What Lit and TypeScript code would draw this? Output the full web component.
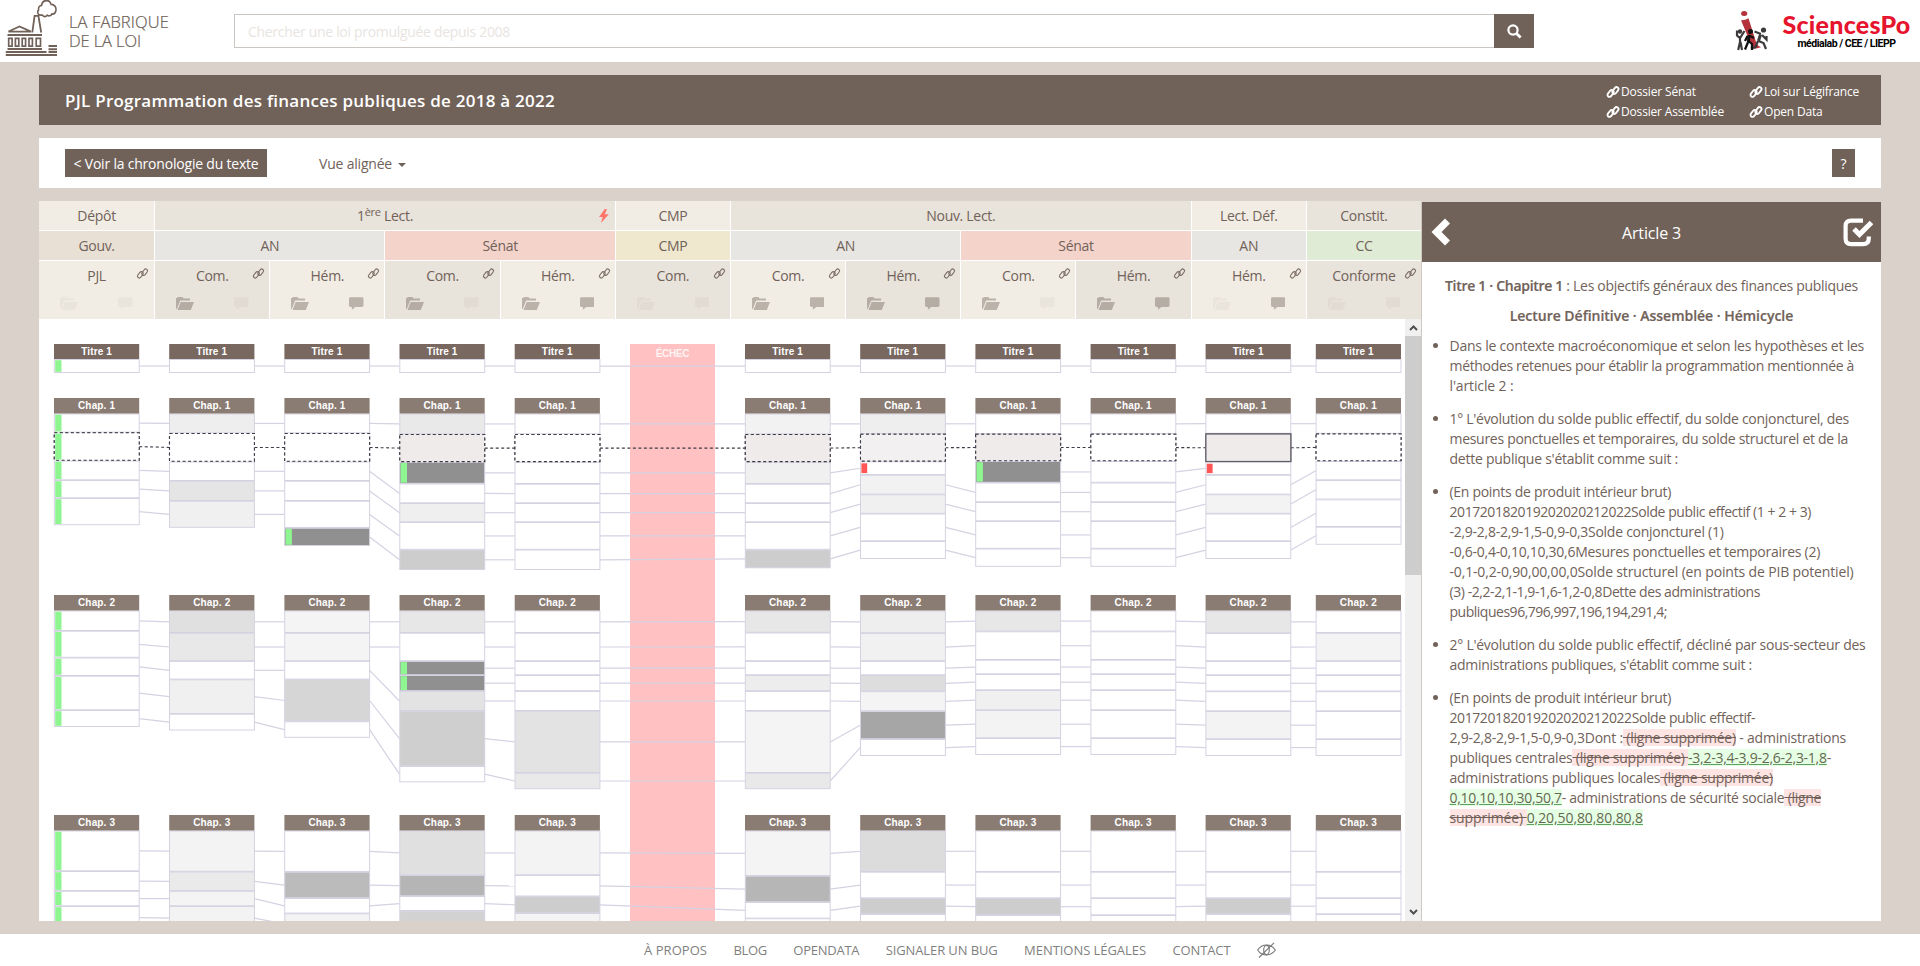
import { LitElement, html, svg, css, nothing } from "lit";
import { customElement, property } from "lit/decorators.js";
import { classMap } from "lit/directives/class-map.js";

/* ---------- text run set to a given measure ---------- */
@customElement("fit-text")
class FitText extends LitElement {
  @property({ type: Number }) w = 0;
  static styles = css`
    :host { display: inline-block; white-space: nowrap; }
  `;
  render() { return html`<slot></slot>`; }
  firstUpdated() {
    const n = (this.textContent || "").trim().length;
    const cur = this.getBoundingClientRect().width;
    if (n && this.w) this.style.letterSpacing = `${(this.w - cur) / n}px`;
  }
}

/* ---------- icons ---------- */
const linkIcon = html`<svg class="i-link" viewBox="0 0 12 12" fill="none" stroke="currentColor"><g transform="rotate(-52 6 6)"><rect x="-.4" y="3" width="7.600" height="4" rx="2"/><rect x="4.800" y="5" width="7.600" height="4" rx="2"/></g></svg>`;
const folderIcon = (on: boolean) => html`<svg class=${classMap({ "i-folder": true, off: !on })} viewBox="0 0 18 13"><path fill="currentColor" d="M0 12V1h1l1-1h4.500l1 1.500h6.500V3.500H4.200L.8 12zM1.500 13L4.700 5H18l-3.200 8z"/></svg>`;
const commentIcon = (on: boolean) => html`<svg class=${classMap({ "i-comment": true, off: !on })} viewBox="0 0 15 13"><path fill="currentColor" d="M1.500 0h12A1.500 1.500 0 0 1 15 1.500V8.500A1.500 1.500 0 0 1 13.500 10H6.500L3 13V10H1.500A1.500 1.500 0 0 1 0 8.500V1.500A1.500 1.500 0 0 1 1.500 0z"/></svg>`;
const boltIcon = html`<svg class="i-bolt" viewBox="0 0 10 14"><path fill="#ff7569" d="M5.800 0L0 8h3.600L2 14 9.800 5.200H5.800L8 0z"/></svg>`;

const logo = html`<svg class="logo" viewBox="0 0 60 60" fill="none" stroke="#716259">
  <path stroke-width="1.800" d="M39.500 15.200h-3a3 3 0 0 1-1.500-5.200a3.800 3.800 0 0 1 3.500-4.700a5.700 5.700 0 0 1 11-1a5.300 5.300 0 0 1 5.600 6.500a4.300 4.300 0 0 1-4.600 3.200a4 4 0 0 1-5.500 1.200a3.500 3.500 0 0 1-5.500 0z" transform="translate(8.500 0) scale(.86 1)"/>
  <path stroke-width="1.800" d="M32.300 32.500L34.600 15.800H38.400L41.200 32.500"/>
  <path stroke-width="1.700" d="M8.500 31.600L19.500 26.500L31 31.600z"/>
  <path stroke-width="1.900" d="M7.500 35H42M7.500 49H42M5.800 52H46.500M5.800 55H57M48.500 46H57M48.500 49.200H57M48.500 52H57"/>
  <path stroke-width="1.700" d="M8.700 38.300H12.100V46.200H8.700zM15.400 38.300H18.800V46.200H15.400zM22.200 38.300H25.600V46.200H22.200zM29 38.300H32.400V46.200H29zM36.200 38.300H40.500V46.200H36.200z"/>
</svg>`;

const people = html`<svg class="people" viewBox="0 0 34 42">
  <ellipse cx="9.200" cy="3.500" rx="3.100" ry="2.500" fill="#b5323a"/>
  <path fill="#b5323a" d="M6 10.200Q10 10.500 13.500 8.200L21.500 33.500Q23.500 36.500 26 37.200L20 38.800Q16.500 37.500 15.500 33z"/>
  <g stroke="#3c3a3a" fill="none" stroke-width="2.200">
    <circle cx="5" cy="21.500" r="2.200" fill="#3c3a3a" stroke="none"/>
    <path d="M2 20.500V25.500L5 28L9.500 21M5 26V32L3.200 40M5.500 32L7 40" />
    <circle cx="28.500" cy="20" r="2.600" fill="#3c3a3a" stroke="none"/>
    <path stroke-width="3" d="M25.500 24.500L23.500 31"/>
    <path d="M26 24L19.500 21.500M27 25L31.500 29.500V26M23.500 31L28.500 33L31 39M23 31L20.500 37L16 38.500"/>
  </g>
  <g stroke="#111" fill="none" stroke-width="2.300">
    <circle cx="15.500" cy="21.500" r="2.500" fill="#111" stroke="none"/>
    <path stroke-width="3" d="M14 25L13.500 31"/>
    <path d="M14 25.500L19 28M13.500 31L17 34V40M13.500 31L10 39.500M12.500 26L10 31"/>
  </g>
</svg>`;

/* ---------- diagram data ---------- */
// One box: key that links it to the next step, fill, optional mark ("g" added, "r" removed)
type Box = [string, string, string?];
interface Block { ys: number[]; boxes: Box[]; }
interface Section { label: string; top: number; main?: boolean; cols: (Block | null)[]; }

const X = [54, 169.200, 284.400, 399.500, 514.700, 630, 745, 860.200, 975.400, 1090.600, 1205.600, 1315.800];
const BW = 85.200;
const DK = "#909090";
const b = (ys: number[], keys: string, fills: string[], marks: string[] = []): Block => ({
  ys, boxes: keys.split("").map((k, i) => [k, fills[i] || "#fff", marks[i]] as Box),
});
const G = ["g", "g", "g", "g", "g", "g"];
const titre = (m?: string) => b([359, 372.700], "a", [], m ? [m] : []);

const sections: Section[] = [
  { label: "Titre 1", top: 344, main: true,
    cols: [titre("g"), titre(), titre(), titre(), titre(), null, titre(), titre(), titre(), titre(), titre(), titre()] },
  { label: "Chap. 1", top: 398, cols: [
    b([413.500, 432.300, 460.500, 480, 498, 524.900], "aBcde", [], G),
    b([413.500, 433, 461.500, 480.700, 500.700, 527.500], "aBcde", ["#eeeeee", "", "", "#e5e5e5", "#f0f0f0"]),
    b([413.500, 433, 461.500, 480.700, 500.700, 527.700, 545.700], "aBcdef", ["", "", "", "", "", DK], ["", "", "", "", "", "g"]),
    b([413.500, 434, 461.800, 483.500, 503, 522, 549.500, 569.700], "aBncdef", ["#e9e9e9", "#efebea", DK, "", "#efefef", "", "#cdcdcd"], ["", "", "g"]),
    b([413.500, 434, 461.800, 483.700, 503, 522, 549.500, 569.700], "aBncdef", []),
    null,
    b([413.500, 434, 461.800, 483.700, 503, 522, 549.500, 568], "aBncdef", ["#f2f2f2", "#efebea", "#f0f0f0", "", "", "", "#cdcdcd"]),
    b([413.500, 433.700, 461.300, 474.800, 494.300, 513.500, 541, 558.700], "aBncdef", ["#eeeeee", "#f2f0f1", "", "#f2f2f2", "#f0f0f0"], ["", "", "r"]),
    b([413.500, 433.700, 461, 482.500, 502, 521, 548.500, 566.500], "aBncdef", ["", "#efebea", DK], ["", "", "g"]),
    b([413.500, 433.700, 461, 482.500, 502, 521, 548.500, 566.500], "aBncdef", []),
    b([413.500, 433.500, 461.700, 474.800, 494.300, 513.500, 541, 558.700], "aBncdef", ["", "#efebea", "", "", "#f3f3f3"], ["", "", "r"]),
    b([413.500, 433.500, 461, 480, 499.300, 526.700, 544.500], "aBcdef", []),
  ] },
  { label: "Chap. 2", top: 595, cols: [
    b([610.500, 630.700, 657.500, 675.700, 710, 726.700], "abcde", [], G),
    b([610.500, 632.700, 660.900, 679.300, 713.700, 730.200], "abcde", ["#e0e0e0", "#e8e8e8", "", "#f0f0f0"]),
    b([610.500, 632.700, 660.900, 679.300, 721.300, 737.500], "abcde", ["#f4f4f4", "#f4f4f4", "", "#d6d6d6"]),
    b([610.500, 632.700, 660.900, 675, 690.900, 710.700, 766, 782], "abxycde", ["#e7e7e7", "", DK, DK, "#e3e3e3", "#cfcfcf"], ["", "", "g", "g"]),
    b([610.500, 632.700, 660.900, 675, 690.900, 710.700, 772.700, 788.900], "abxycde", ["", "", "", "", "", "#e3e3e3", "#e9e9e9"]),
    null,
    b([610.500, 632.500, 660.900, 675, 690.900, 710.700, 772.700, 788.900], "abxycde", ["#e7e7e7", "", "", "#ededed", "", "#f4f4f4", "#e9e9e9"]),
    b([610.500, 632.900, 660.900, 675, 691.200, 711, 739, 755.700], "abxycde", ["#eeeeee", "#f1f1f1", "", "#dddddd", "#f4f4f4", "#a6a6a6"]),
    b([610.500, 631.300, 659.700, 674, 690, 710, 738, 754.700], "abxycde", ["#e7e7e7", "", "", "", "#f0f0f0", "#f3f3f3"]),
    b([610.500, 631.300, 659.700, 674, 690, 710, 738, 754.700], "abxycde", []),
    b([610.500, 632.900, 660.900, 675, 691.200, 711, 739, 755.700], "abxycde", ["#e7e7e7", "", "", "", "", "#f3f3f3"]),
    b([610.500, 632.700, 660.900, 675, 691.200, 711, 739, 755.700], "abxycde", ["", "#f3f3f3"]),
  ] },
  { label: "Chap. 3", top: 815, cols: [
    b([830.500, 871, 890.800, 906, 929], "abcd", [], G),
    b([830.500, 871.500, 890.800, 906, 930], "abcd", ["#f3f3f3", "#eaeaea", "#f4f4f4", "#f3f3f3"]),
    b([830.500, 871.700, 898, 913.300, 934], "abcd", ["", "#bbbbbb", "", "#f3f3f3"]),
    b([830.500, 875, 896, 910.700, 934], "abcd", ["#e0e0e0", "#b5b5b5", "", "#d2d2d2"]),
    b([830.500, 875, 896.200, 913, 934], "abcd", ["#f3f3f3", "", "#cdcdcd", "#f4f4f4"]),
    null,
    b([830.500, 875.700, 902, 918.300, 938], "abcd", ["#f4f4f4", "#b6b6b6"]),
    b([830.500, 871.700, 898, 914, 934], "abcd", ["#dcdcdc", "", "#cdcdcd"]),
    b([830.500, 871.700, 898, 915, 934], "abcd", ["", "", "#cdcdcd"]),
    b([830.500, 871.700, 898, 915, 934], "abcd", []),
    b([830.500, 871.700, 898, 914, 934], "abcd", ["", "", "#cdcdcd"]),
    b([830.500, 871.700, 898, 914, 934], "abcd", []),
  ] },
];

/* ---------- step headings ---------- */
const stages = [
  { t: "Dépôt", n: 1 }, { t: "lect1", n: 4 }, { t: "CMP", n: 1 }, { t: "Nouv. Lect.", n: 4 }, { t: "Lect. Déf.", n: 1 }, { t: "Constit.", n: 1 },
];
const chambers = [
  { t: "Gouv.", n: 1, c: "gouv" }, { t: "AN", n: 2, c: "an" }, { t: "Sénat", n: 2, c: "senat" }, { t: "CMP", n: 1, c: "cmp" },
  { t: "AN", n: 2, c: "an" }, { t: "Sénat", n: 2, c: "senat" }, { t: "AN", n: 1, c: "an" }, { t: "CC", n: 1, c: "cc" },
];
const steps: [string, boolean, boolean][] = [
  ["PJL", false, false], ["Com.", true, false], ["Hém.", true, true], ["Com.", true, false], ["Hém.", true, true], ["Com.", false, false],
  ["Com.", true, true], ["Hém.", true, true], ["Com.", true, false], ["Hém.", true, true], ["Hém.", false, true], ["Conforme", false, false],
];

@customElement("law-diagram")
class LawDiagram extends LitElement {
  static styles = css`
    :host { display: block; width: 1366px; height: 602px; }
    svg { display: block; }
    text { font: bold 10px "Liberation Sans", Arial, sans-serif; fill: #fff; text-anchor: middle; letter-spacing: .15px; }
    .echec { fill-opacity: .85; letter-spacing: -.3px; }
    .box { stroke: #d5d2e2; stroke-width: 1; }
    .link { stroke: #d5d2e2; stroke-width: 1.200; fill: none; }
    .dash { stroke: #3d3b47; stroke-dasharray: 3 2.500; stroke-width: 1.100; }
    .solid { stroke: #5f5d68; stroke-width: 1.200; }
  `;
  private rect(x: number, blk: Block, i: number, col: number) {
    const [k, fill, mark] = blk.boxes[i];
    const y = blk.ys[i] + 0.5, h = blk.ys[i + 1] - blk.ys[i] - 0.7;
    const cls = "box" + (k === "B" ? (col === 10 ? " solid" : " dash") : "");
    return svg`<rect class=${cls} x=${x + 0.3} y=${y} width=${BW - 0.3} height=${h} fill=${fill}></rect>
      ${mark ? svg`<rect x=${x + 1.2} y=${y + (mark === "r" ? 1.500 : 0.700)} width=${mark === "r" ? 5.800 : 6.300}
        height=${h - (mark === "r" ? 3 : 1.400)} fill=${mark === "r" ? "#ff5555" : "#8ef591"}></rect>` : nothing}`;
  }
  private links(cols: (Block | null)[]) {
    const out: unknown[] = [];
    for (let c = 0; c < 11; c++) {
      const from = cols[c];
      if (!from) continue;
      const t = cols[c + 1] ? c + 1 : c + 2;
      const to = cols[t]!;
      from.boxes.forEach(([k, , mark], i) => {
        const j = to.boxes.findIndex(o => o[0] === k);
        if (j < 0 || mark === "r") return;
        const my = (blk: Block, n: number) => (blk.ys[n] + blk.ys[n + 1]) / 2 + 0.2;
        out.push(svg`<line class=${k === "B" ? "link dash" : "link"} x1=${X[c] + BW} y1=${my(from, i)} x2=${X[t]} y2=${my(to, j)}></line>`);
      });
    }
    return out;
  }
  render() {
    return html`<svg width="1366" height="602" viewBox="39 319 1366 602">
      <rect x="630" y="344" width="85" height="577" fill="#ffc1c1"></rect>
      <text class="echec" x="672.500" y="357">ÉCHEC</text>
      ${sections.map(s => svg`
        ${this.links(s.cols)}
        ${s.cols.map((blk, c) => blk ? svg`
          ${blk.boxes.map((_, i) => this.rect(X[c], blk, i, c))}
          ${blk.boxes.map((bx, i) => bx[0] === "B" ? this.rect(X[c], blk, i, c) : nothing)}
          <rect x=${X[c]} y=${s.top} width=${BW} height=${s.main ? 15 : 15.500} fill=${s.main ? "#786860" : "#8a7c73"}></rect>
          <text x=${X[c] + BW / 2} y=${s.top + 11.200}>${s.label}</text>` : nothing)}`)}
    </svg>`;
  }
}

@customElement("app-root")
class AppRoot extends LitElement {
  static styles = css`
    :host { display: flex; flex-direction: column; height: 966px; background: #dad1cb; color: #716259;
      font: 14px/20px "Open Sans", "Noto Sans", sans-serif; overflow: hidden; }
    * { box-sizing: border-box; }
    svg { display: block; flex: none; }
    header { height: 62px; background: #fff; display: flex; align-items: center; flex: none; }
    .logo { width: 60px; height: 60px; margin-bottom: 2px; }
    .brand { margin: 1px 0 0 9px; width: 165px; display: flex; flex-direction: column; font-size: 16.500px; line-height: 18.500px; font-weight: 300; color: #6a5b52; -webkit-text-stroke: .2px #6a5b52; }
    .search { display: flex; width: 1300px; height: 34px; }
    .field { flex: 1; border: 1px solid #ccc6c3; border-right: 0; padding: 7px 13px 0; color: #e8e4e1; }
    .go { width: 40px; background: #716259; display: grid; place-items: center; }
    .go svg { width: 15px; height: 15px; }
    .people { width: 34px; height: 42px; margin-left: 201px; }
    .spo { margin-left: 12.500px; width: 130px; display: flex; flex-direction: column; align-items: center; }
    .spo .a { font: 900 25px/25px Lato, sans-serif; color: #e6142d; }
    .spo .b { font: bold 10.500px/13px Roboto, sans-serif; color: #000; }
    .title { margin: 13px 39px 0; height: 50px; flex: none; background: #716259; color: #fff; display: flex; align-items: center; padding: 2px 0 0 26px; justify-content: space-between; }
    .title h1 { margin: 0; font-size: 17px; font-weight: 650; }
    .ext { display: grid; grid-template-columns: 143px 131px; font-size: 12px; line-height: 20px; padding-top: 1px; }
    .ext div { display: flex; align-items: center; gap: 2px; }
    .ext .i-link { width: 12px; height: 12px; stroke-width: 1.800px; overflow: visible; }
    .bar { margin: 13px 39px 0; height: 50px; flex: none; background: #fff; display: flex; align-items: center; padding: 0 26px; }
    .btn { background: #716259; color: #fff; height: 28px; line-height: 29.500px; text-align: center; }
    .back { width: 202px; }
    .view { margin-left: 52px; display: flex; align-items: center; gap: 6px; padding-top: 2px; }
    .caret { border: 4px solid transparent; border-top-color: #716259; border-bottom: 0; margin-top: 2px; }
    .help { width: 23px; margin-left: auto; }
    main { margin: 13px 39px 13px; height: 720px; flex: none; display: flex; }
    .left { width: 1382px; background: #fff; }
    .grid { display: grid; grid-template-columns: repeat(12, 1fr); text-align: center; row-gap: 1px; letter-spacing: -.3px; }
    .cell { border-left: 1px solid #fff; height: 29px; line-height: 28px; background: #f2ede4; display: flex; justify-content: center; align-items: center; }
    .cell.alt { background: #e8e3db; }
    .cell.edge, .step.edge { border-left: 0; }
    .s4 { grid-column: span 4; } .s2 { grid-column: span 2; }
    .cell.gouv { background: #e8e0d5; } .cell.an { background: #e8e6e2; } .cell.senat { background: #f4d3cb; } .cell.cmp { background: #f0e8ce; } .cell.cc { background: #dfebd5; }
    .lect { flex: 1; padding-left: 16px; }
    sup { font-size: 11px; line-height: 0; vertical-align: 5px; }
    .i-bolt { width: 10px; height: 14px; margin-right: 6px; }
    .step { border-left: 1px solid #fff; height: 58px; background: #f2ede4; display: grid; grid-template-columns: 21px 58px 19px 1fr; grid-template-rows: 28px 1fr; }
    .step.alt { background: #e8e3db; }
    .step .n { grid-column: 1 / 5; grid-row: 1; line-height: 29px; }
    .step .i-link { grid-column: 4; grid-row: 1; width: 11px; height: 11px; margin-top: 7px; stroke-width: 1.250px; opacity: .9; overflow: visible; }
    .i-folder { grid-column: 2; grid-row: 2; width: 18px; height: 13px; margin-top: 8px; opacity: .42; }
    .i-comment { grid-column: 3; grid-row: 2; width: 14.500px; height: 13px; margin-top: 8px; opacity: .42; }
    .i-folder.off, .i-comment.off { opacity: .05; }
    .scroll { display: flex; height: 602px; overflow: hidden; }
    .track { width: 16px; background: #f0f0f0; display: flex; flex-direction: column; align-items: center; padding: 6px 0; }
    .track svg { width: 9px; height: 6px; }
    .thumb { width: 16px; height: 239px; background: #cdcdcd; margin: 5px 0 auto; }
    aside { width: 460px; height: 719px; margin-top: 1px; background: #fff; border-left: 1px solid #d0c8c2; }
    .ahead { height: 60px; background: #716259; color: #fff; display: flex; align-items: center; padding: 0 7px 0 9px; font-size: 16px; }
    .ahead .chev { width: 20px; height: 28px; }
    .ahead .chk { width: 31px; height: 29px; }
    .ahead fit-text { margin: 1px auto 0 171px; }
    .line { text-align: center; height: 20px; margin-bottom: 10px; }
    .body { padding: 13.500px 0 0; }
    ul { list-style: none; margin: 0; padding: 0 0 0 27.500px; }
    li { margin-bottom: 13px; display: flex; flex-direction: column; align-items: flex-start; }
    li fit-text { line-height: 20px; height: 20px; white-space: pre; }
    li fit-text:first-child::before { content: ""; float: left; width: 5.500px; height: 5.500px; border-radius: 50%; background: #716259; margin: 7px 11.500px 0 -17px; }
    del { background: linear-gradient(#fee4e3, #fee4e3) 0 50% / 100% 17px no-repeat; }
    ins { background: linear-gradient(#e5ffe5, #e5ffe5) 0 50% / 100% 17px no-repeat; color: #65684f; text-decoration-color: #5f9f60; }
    footer { flex: 1; background: #fff; color: #7f7f80; display: flex; font-size: 13px; line-height: 32px; padding-left: 644px; gap: 26.400px; align-items: center; }
    .eye { width: 19px; height: 16px; }
    b { font-weight: 600; -webkit-text-stroke: .2px #716259; }
  `;

  render() {
    const T = (w: number, t: unknown) => html`<fit-text .w=${w}>${t}</fit-text>`;
    return html`
      <header>
        ${logo}
        <div class="brand"><div>${T(100, "LA FABRIQUE")}</div><div>${T(72, "DE LA LOI")}</div></div>
        <div class="search">
          <div class="field">${T(262, "Chercher une loi promulguée depuis 2008")}</div>
          <div class="go"><svg viewBox="0 0 15 15" fill="none" stroke="#fff"><circle cx="6" cy="6" r="4.600" stroke-width="2.200"/><path d="M9.500 9.500L13.600 13.600" stroke-width="2.800"/></svg></div>
        </div>
        ${people}
        <div class="spo"><span class="a">${T(128, "SciencesPo")}</span><span class="b">${T(98, "médialab / CEE / LIEPP")}</span></div>
      </header>
      <section class="title">
        <h1>${T(490, "PJL Programmation des finances publiques de 2018 à 2022")}</h1>
        <div class="ext">
          <div>${linkIcon}${T(75, "Dossier Sénat")}</div><div>${linkIcon}${T(95, "Loi sur Légifrance")}</div>
          <div>${linkIcon}${T(103, "Dossier Assemblée")}</div><div>${linkIcon}${T(58.500, "Open Data")}</div>
        </div>
      </section>
      <section class="bar">
        <div class="btn back">${T(185, "< Voir la chronologie du texte")}</div>
        <div class="view">${T(73, "Vue alignée")}<span class="caret"></span></div>
        <div class="btn help">?</div>
      </section>
      <main>
        <div class="left">
          <div class="grid">
            ${stages.map((s, i) => html`<div class=${classMap({ cell: true, edge: i === 0, alt: i % 2 === 1, s4: s.n === 4 })}>
              ${s.t === "lect1" ? html`<span class="lect">1<sup>ère</sup> Lect.</span>${boltIcon}` : s.t}</div>`)}
            ${chambers.map((c, i) => html`<div class="cell ${c.c} ${c.n === 2 ? "s2" : ""} ${i ? "" : "edge"}">${c.t}</div>`)}
            ${steps.map(([t, fo, co], i) => html`<div class=${classMap({ step: true, edge: i === 0, alt: i % 2 === 1 })}>
              <span class="n">${t}</span>${linkIcon}${folderIcon(fo)}${commentIcon(co)}</div>`)}
          </div>
          <div class="scroll">
            <law-diagram></law-diagram>
            <div class="track">
              <svg viewBox="0 0 9 6" fill="none" stroke="#505050" stroke-width="2"><path d="M1 5L4.500 1.500L8 5"/></svg>
              <div class="thumb"></div>
              <svg viewBox="0 0 9 6" fill="none" stroke="#505050" stroke-width="2"><path d="M1 1L4.500 4.500L8 1"/></svg>
            </div>
          </div>
        </div>
        <aside>
          <div class="ahead">
            <svg class="chev" viewBox="0 0 20 28"><path fill="#fff" d="M14 0.500L19 5.500L10.500 14L19 22.500L14 27.500L.5 14z"/></svg>
            ${T(59, "Article 3")}
            <svg class="chk" viewBox="0 0 31 29" fill="none" stroke="#fff"><path stroke-width="4.200" d="M20 2.600H8Q2.600 2.600 2.600 8V20.500Q2.600 26.200 8 26.200H20Q25.800 26.200 25.800 20.500V18.500"/><path stroke-width="5" d="M11 11L16.500 16.500L28.500 4.500"/></svg>
          </div>
          <div class="body">
            <div class="line">${T(413, html`<b>Titre 1 · Chapitre 1</b> : Les objectifs généraux des finances publiques`)}</div>
            <div class="line">${T(283.500, html`<b>Lecture Définitive · Assemblée · Hémicycle</b>`)}</div>
            <ul>
              <li>${T(414.500, "Dans le contexte macroéconomique et selon les hypothèses et les")}${T(404.500, "méthodes retenues pour établir la programmation mentionnée à")}${T(64, "l'article 2 :")}</li>
              <li>${T(399.500, "1° L'évolution du solde public effectif, du solde conjoncturel, des")}${T(398.500, "mesures ponctuelles et temporaires, du solde structurel et de la")}${T(228.500, "dette publique s'établit comme suit :")}</li>
              <li>${T(221.500, "(En points de produit intérieur brut)")}${T(361.500, "201720182019202020212022Solde public effectif (1 + 2 + 3)")}${T(274, "-2,9-2,8-2,9-1,5-0,9-0,3Solde conjoncturel (1)")}${T(370.500, "-0,6-0,4-0,10,10,30,6Mesures ponctuelles et temporaires (2)")}${T(404, "-0,1-0,2-0,90,00,00,0Solde structurel (en points de PIB potentiel)")}${T(310.500, "(3) -2,2-2,1-1,9-1,6-1,2-0,8Dette des administrations")}${T(217.500, "publiques96,796,997,196,194,291,4;")}</li>
              <li>${T(416, "2° L'évolution du solde public effectif, décliné par sous-secteur des")}${T(302.500, "administrations publiques, s'établit comme suit :")}</li>
              <li>${T(221.500, "(En points de produit intérieur brut)")}${T(305.500, "201720182019202020212022Solde public effectif-")}${T(396.500, html`2,9-2,8-2,9-1,5-0,9-0,3Dont :<del> (ligne supprimée)</del> - administrations`)}${T(381.500, html`publiques centrales<del> (ligne supprimée) </del><ins>-3,2-3,4-3,9-2,6-2,3-1,8</ins>-`)}${T(323.500, html`administrations publiques locales<del> (ligne supprimée)</del>`)}${T(371.500, html`<ins>0,10,10,10,30,50,7</ins>- administrations de sécurité sociale<del> (ligne</del>`)}${T(193.500, html`<del>supprimée) </del><ins>0,20,50,80,80,80,8</ins>`)}</li>
            </ul>
          </div>
        </aside>
      </main>
      <footer>
        ${T(63, "À PROPOS")}${T(33.500, "BLOG")}${T(66, "OPENDATA")}${T(112, "SIGNALER UN BUG")}${T(122, "MENTIONS LÉGALES")}${T(58, "CONTACT")}
        <svg class="eye" viewBox="0 0 19 16" fill="none" stroke="#777" stroke-width="1.100"><path d="M.6 8Q4 3 9.500 3T18.400 8Q15 13 9.500 13T.6 8z"/><ellipse cx="9.500" cy="8" rx="2.800" ry="4.600"/><path d="M2 15.500L17 .8"/></svg>
      </footer>`;
  }
}
